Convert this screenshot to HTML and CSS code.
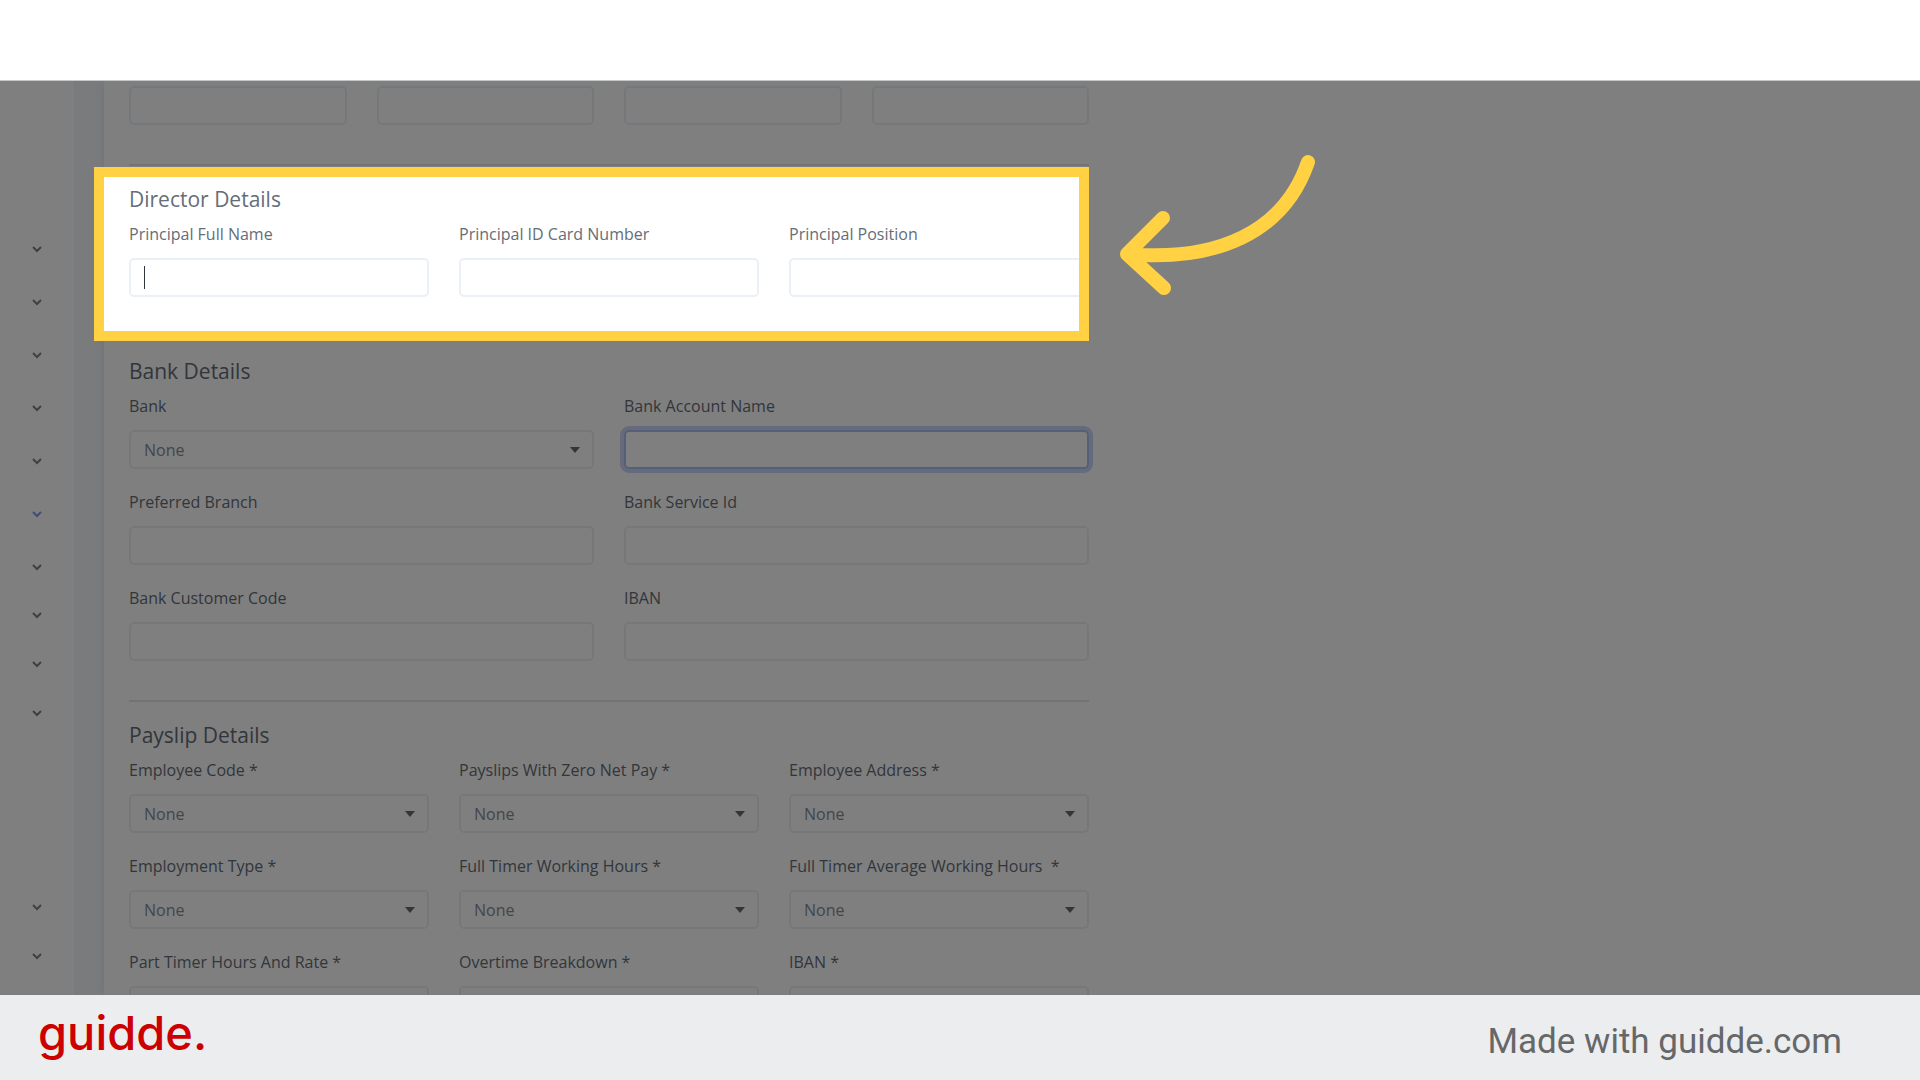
FILE: index.html
```html
<!DOCTYPE html>
<html lang="en">
<head>
  <meta charset="UTF-8">
  <meta name="viewport" content="width=device-width, initial-scale=1.0">
  <title>Director Details</title>
  <link rel="stylesheet" href="styles.css">
</head>
<body>
  <header class="top-bar"></header>

  <div class="screen">
    <nav class="sidebar" aria-label="Main menu">
      <div class="menu-group wide">
        <button class="menu-item" aria-label="Expand menu 1"><svg class="chevron" viewBox="0 0 10 8"><path d="M1 2l4 4 4-4"/></svg></button>
        <button class="menu-item" aria-label="Expand menu 2"><svg class="chevron" viewBox="0 0 10 8"><path d="M1 2l4 4 4-4"/></svg></button>
        <button class="menu-item" aria-label="Expand menu 3"><svg class="chevron" viewBox="0 0 10 8"><path d="M1 2l4 4 4-4"/></svg></button>
        <button class="menu-item" aria-label="Expand menu 4"><svg class="chevron" viewBox="0 0 10 8"><path d="M1 2l4 4 4-4"/></svg></button>
        <button class="menu-item" aria-label="Expand menu 5"><svg class="chevron" viewBox="0 0 10 8"><path d="M1 2l4 4 4-4"/></svg></button>
        <button class="menu-item active" aria-label="Expand menu 6"><svg class="chevron" viewBox="0 0 10 8"><path d="M1 2l4 4 4-4"/></svg></button>
        <button class="menu-item" aria-label="Expand menu 7"><svg class="chevron" viewBox="0 0 10 8"><path d="M1 2l4 4 4-4"/></svg></button>
      </div>
      <div class="menu-group">
        <button class="menu-item" aria-label="Expand menu 8"><svg class="chevron" viewBox="0 0 10 8"><path d="M1 2l4 4 4-4"/></svg></button>
        <button class="menu-item" aria-label="Expand menu 9"><svg class="chevron" viewBox="0 0 10 8"><path d="M1 2l4 4 4-4"/></svg></button>
        <button class="menu-item" aria-label="Expand menu 10"><svg class="chevron" viewBox="0 0 10 8"><path d="M1 2l4 4 4-4"/></svg></button>
      </div>
      <div class="menu-group last">
        <button class="menu-item" aria-label="Expand menu 11"><svg class="chevron" viewBox="0 0 10 8"><path d="M1 2l4 4 4-4"/></svg></button>
        <button class="menu-item" aria-label="Expand menu 12"><svg class="chevron" viewBox="0 0 10 8"><path d="M1 2l4 4 4-4"/></svg></button>
      </div>
    </nav>

    <main class="panel">
      <form class="form">
        <div class="row four first">
          <input type="text" class="control" aria-label="Company field 1">
          <input type="text" class="control" aria-label="Company field 2">
          <input type="text" class="control" aria-label="Company field 3">
          <input type="text" class="control" aria-label="Company field 4">
        </div>

        <section class="section">
          <h2>Director Details</h2>
          <div class="row three">
            <div class="form-group">
              <label for="fullName">Principal Full Name</label>
              <div class="control-wrap">
                <input type="text" class="control" id="fullName">
                <span class="text-cursor"></span>
              </div>
            </div>
            <div class="form-group">
              <label for="idCard">Principal ID Card Number</label>
              <input type="text" class="control" id="idCard">
            </div>
            <div class="form-group">
              <label for="position">Principal Position</label>
              <input type="text" class="control" id="position">
            </div>
          </div>
          <div class="spotlight"></div>
          <svg class="arrow" viewBox="0 0 196 142" aria-hidden="true">
            <path d="M187 8C163 78 97 108 6 100M42 64 6 100 43 134"/>
          </svg>
        </section>

        <section class="section">
          <h2>Bank Details</h2>
          <div class="row two">
            <div class="form-group">
              <label for="bank">Bank</label>
              <div class="control-wrap select">
                <select class="control" id="bank"><option>None</option></select>
              </div>
            </div>
            <div class="form-group">
              <label for="accountName">Bank Account Name</label>
              <input type="text" class="control focused" id="accountName">
            </div>
            <div class="form-group">
              <label for="branch">Preferred Branch</label>
              <input type="text" class="control" id="branch">
            </div>
            <div class="form-group">
              <label for="serviceId">Bank Service Id</label>
              <input type="text" class="control" id="serviceId">
            </div>
            <div class="form-group">
              <label for="customerCode">Bank Customer Code</label>
              <input type="text" class="control" id="customerCode">
            </div>
            <div class="form-group">
              <label for="iban">IBAN</label>
              <input type="text" class="control" id="iban">
            </div>
          </div>
        </section>

        <section class="section">
          <h2>Payslip Details</h2>
          <div class="row three">
            <div class="form-group">
              <label for="employeeCode">Employee Code *</label>
              <div class="control-wrap select">
                <select class="control" id="employeeCode"><option>None</option></select>
              </div>
            </div>
            <div class="form-group">
              <label for="zeroNetPay">Payslips With Zero Net Pay *</label>
              <div class="control-wrap select">
                <select class="control" id="zeroNetPay"><option>None</option></select>
              </div>
            </div>
            <div class="form-group">
              <label for="employeeAddress">Employee Address *</label>
              <div class="control-wrap select">
                <select class="control" id="employeeAddress"><option>None</option></select>
              </div>
            </div>
            <div class="form-group">
              <label for="employmentType">Employment Type *</label>
              <div class="control-wrap select">
                <select class="control" id="employmentType"><option>None</option></select>
              </div>
            </div>
            <div class="form-group">
              <label for="fullTimer">Full Timer Working Hours *</label>
              <div class="control-wrap select">
                <select class="control" id="fullTimer"><option>None</option></select>
              </div>
            </div>
            <div class="form-group">
              <label for="averageHours">Full Timer Average Working Hours &nbsp;*</label>
              <div class="control-wrap select">
                <select class="control" id="averageHours"><option>None</option></select>
              </div>
            </div>
            <div class="form-group">
              <label for="partTimer">Part Timer Hours And Rate *</label>
              <select class="control" id="partTimer"></select>
            </div>
            <div class="form-group">
              <label for="overtime">Overtime Breakdown *</label>
              <select class="control" id="overtime"></select>
            </div>
            <div class="form-group">
              <label for="payslipIban">IBAN *</label>
              <select class="control" id="payslipIban"></select>
            </div>
          </div>
        </section>
      </form>
    </main>
  </div>

  <footer class="footer">
    <span class="logo">guidde.</span>
    <span class="credit">Made with guidde.com</span>
  </footer>
</body>
</html>
```
FILE: styles.css
```css
* {
  box-sizing: border-box;
}
body {
  display: flex;
  flex-direction: column;
  height: 100vh;
  margin: 0;
  overflow: hidden;
  font-family: "Open Sans", sans-serif;
  font-size: 16px;
  line-height: 24px;
  color: #656d77;
  background: #fff;
}
.top-bar {
  flex: none;
  height: 81px;
  border-bottom: 1px solid #c4c8c8;
}
.screen {
  position: relative;
  display: flex;
  flex: 1;
  min-height: 0;
  overflow: hidden;
  background: #f3f6fb;
}

/* Sidebar */
.sidebar {
  flex: none;
  width: 74px;
  padding-top: 144px;
  background: #fff;
}
.menu-group {
  display: flex;
  flex-direction: column;
  gap: 1px;
}
.menu-group.wide {
  gap: 5px;
}
.menu-group.last {
  margin-top: 146px;
}
.menu-item {
  display: flex;
  align-items: center;
  justify-content: center;
  height: 48px;
  padding: 0;
  border: none;
  background: none;
  color: #7b828b;
  cursor: pointer;
}
.menu-item.active {
  color: #7c9bea;
}
.chevron {
  width: 10px;
  height: 8px;
  fill: none;
  stroke: currentColor;
  stroke-width: 2;
}

/* Form */
.panel {
  flex: 1;
  margin-left: 30px;
  padding: 5px 25px 0;
  background: #fff;
  box-shadow: 0 0 10px rgba(60, 80, 120, 0.1);
}
.form {
  width: 50vw;
}
.row {
  display: grid;
  column-gap: 30px;
}
.row.two {
  grid-template-columns: repeat(2, 1fr);
}
.row.three {
  grid-template-columns: repeat(3, 1fr);
}
.row.four {
  grid-template-columns: repeat(4, 1fr);
}
.row.first {
  margin-bottom: 39px;
}
.section {
  position: relative;
  padding: 19px 0 18px;
  border-top: 2px solid #e6e7e9;
}
h2 {
  margin: 0 0 9px;
  font-size: 21px;
  font-weight: 400;
  line-height: 28px;
}
.form-group {
  margin-bottom: 21px;
}
.form-group label {
  display: block;
  margin-bottom: 12px;
  font-weight: 500;
}
.control {
  display: block;
  width: 100%;
  height: 39px;
  padding: 0 13px;
  border: 2px solid #ebf0f6;
  border-radius: 5px;
  background: #fff;
  color: #868c94;
  font: inherit;
  appearance: none;
}
.control.focused {
  border-color: #a9c0f2;
  box-shadow: 0 0 0 4px #cad7f4;
}
.control-wrap {
  position: relative;
}
.select::after {
  content: "";
  position: absolute;
  top: 17px;
  right: 14px;
  border: 5px solid transparent;
  border-top: 6px solid #656d77;
  border-bottom: none;
  pointer-events: none;
}
.text-cursor {
  position: absolute;
  top: 8px;
  left: 15px;
  width: 1px;
  height: 23px;
  background: #2d3540;
}

/* Spotlight dims everything in the screen but the director section */
.spotlight {
  position: absolute;
  inset: 1px 0 -5px -35px;
  z-index: 1;
  border: 10px solid #ffd143;
  box-shadow: 0 0 0 100vmax rgba(0, 0, 0, 0.5);
  pointer-events: none;
}
.arrow {
  position: absolute;
  top: -12px;
  left: 100%;
  z-index: 2;
  width: 196px;
  height: 142px;
  margin-left: 32px;
  fill: none;
  stroke: #ffd143;
  stroke-width: 14;
  stroke-linecap: round;
  stroke-linejoin: round;
  overflow: visible;
}

/* Footer */
.footer {
  display: flex;
  flex: none;
  align-items: center;
  justify-content: space-between;
  height: 85px;
  padding: 0 78px 0 38px;
  background: #ecedef;
}
.logo {
  padding-bottom: 10px;
  color: #c00;
  font-family: Inter, sans-serif;
  font-size: 47px;
  font-weight: 500;
  line-height: 60px;
}
.credit {
  padding-top: 8px;
  color: #666769;
  font-family: Roboto, sans-serif;
  font-size: 35px;
  line-height: 40px;
}
```
